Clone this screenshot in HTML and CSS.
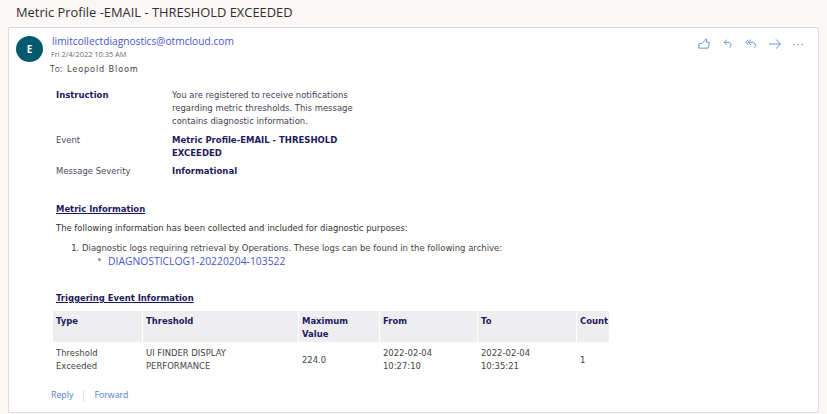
FILE: index.html
```html
<!DOCTYPE html>
<html lang="en">
<head>
<meta charset="utf-8">
<title>Metric Profile</title>
<link rel="stylesheet" href="styles.css">
</head>
<body>
<div class="subject">Metric Profile -EMAIL - THRESHOLD EXCEEDED</div>
<main class="card">
  <header class="head">
    <div class="avatar">E</div>
    <div class="meta">
      <div class="sender">limitcollectdiagnostics@otmcloud.com</div>
      <div class="date">Fri 2/4/2022 10:35 AM</div>
      <div class="to"><span class="to-label">To:</span><span class="to-name">Leopold Bloom</span></div>
    </div>
    <div class="actions">
      <svg class="icon" viewBox="0 0 14 14" fill="none" stroke="#5b92dc" stroke-width="1.100"><path d="M1 6.500h3.200L8 3l1-2 1.200.8-.6 3h3.600l-1.200 7H1z"/></svg>
      <svg class="icon" viewBox="0 0 14 14" fill="none" stroke="#5b92dc" stroke-width="1.100"><path d="M5.500 2 2.500 5l3 3M2.500 5H7c2.500 0 3.500 1.500 3.500 3.200 0 1.500-.8 2.800-1.800 3.300"/></svg>
      <svg class="icon" viewBox="0 0 14 14" fill="none" stroke="#5b92dc" stroke-width="1.100"><path d="M4 2 1 5l3 3M7 2 4 5l3 3M4 5h4.500C10.500 5 12 6.300 12 8.400c0 1.400-.7 2.500-1.800 3.100"/></svg>
      <svg class="icon" viewBox="0 0 14 14" fill="none" stroke="#5b92dc" stroke-width="1.100"><path d="M0 7h13.500M8 1.500 13.500 7 8 12.500"/></svg>
      <svg class="icon" viewBox="0 0 14 14" fill="#5b92dc"><circle cx="2" cy="7.500" r=".9"/><circle cx="7" cy="7.500" r=".9"/><circle cx="12" cy="7.500" r=".9"/></svg>
    </div>
  </header>

  <section class="body">
    <dl class="info">
      <dt class="strong">Instruction</dt>
      <dd>You are registered to receive notifications regarding metric thresholds. This message contains diagnostic information.</dd>
      <dt>Event</dt>
      <dd class="strong">Metric Profile-EMAIL - THRESHOLD EXCEEDED</dd>
      <dt>Message Severity</dt>
      <dd class="strong">Informational</dd>
    </dl>

    <h2 class="section-title metric-title">Metric Information</h2>
    <p class="intro">The following information has been collected and included for diagnostic purposes:</p>
    <ol class="logs">
      <li>Diagnostic logs requiring retrieval by Operations. These logs can be found in the following archive:
        <ul class="files"><li><a href="#">DIAGNOSTICLOG1-20220204-103522</a></li></ul>
      </li>
    </ol>

    <h2 class="section-title trigger-title">Triggering Event Information</h2>
    <table class="events">
      <thead>
        <tr><th class="c1">Type</th><th class="c2">Threshold</th><th class="c3">Maximum Value</th><th class="c4">From</th><th class="c5">To</th><th class="c6">Count</th></tr>
      </thead>
      <tbody>
        <tr><td>Threshold Exceeded</td><td>UI FINDER DISPLAY PERFORMANCE</td><td>224.0</td><td>2022-02-04 10:27:10</td><td>2022-02-04 10:35:21</td><td class="last">1</td></tr>
      </tbody>
    </table>
  </section>

  <footer class="foot">
    <a href="#">Reply</a>
    <span class="sep"></span>
    <a href="#">Forward</a>
  </footer>
</main>
</body>
</html>
```

FILE: styles.css
```css
html, body {
  margin: 0;
  padding: 0;
}
body {
  width: 827px;
  height: 414px;
  overflow: hidden;
  background: #fbf7f6;
  font-family: "DejaVu Sans", Verdana, sans-serif;
  font-size: 8.450px;
  line-height: 13px;
  color: #3f3f47;
}
.subject {
  height: 27px;
  box-sizing: border-box;
  padding: 2px 0 0 16px;
  font-family: "Open Sans", "Noto Sans", sans-serif;
  font-size: 12.900px;
  line-height: 20px;
  color: #2f2f2f;
}
.card {
  margin-left: 8px;
  width: 811px;
  height: 386px;
  box-sizing: border-box;
  background: #fff;
  border: 1px solid #dedcdb;
  border-radius: 2px;
  position: relative;
}
.head {
  display: flex;
  padding: 8px 0 0 7px;
  height: 50px;
  box-sizing: border-box;
}
.avatar {
  flex: none;
  width: 27px;
  height: 26px;
  border-radius: 50%;
  background: #04596f;
  color: #fff;
  display: flex;
  align-items: center;
  justify-content: center;
  font: bold 10px/1 "Open Sans", sans-serif;
}
.meta {
  margin-left: 7px;
  font-family: "Open Sans", sans-serif;
}
.sender {
  margin: -2px 0 0 2px;
  font-size: 10.200px;
  line-height: 15px;
  color: #4a55c9;
}
.date {
  font-size: 7.400px;
  line-height: 11px;
  color: #6b6b6b;
  margin-left: 1px;
}
.to {
  display: flex;
  margin-top: 3px;
  line-height: 12px;
  color: #444;
}
.to-label {
  width: 17px;
  font-size: 8.500px;
}
.to-name {
  font-family: "DejaVu Sans", sans-serif;
  font-size: 8.200px;
  letter-spacing: .85px;
}
.actions {
  margin-left: auto;
  margin-right: 14px;
  margin-top: 2px;
  display: flex;
  gap: 11.500px;
  height: 12px;
}
.icon {
  width: 12px;
  height: 12px;
}
.body {
  padding: 11px 0 0 47px;
}
.info {
  margin: 0;
  display: grid;
  grid-template-columns: 116px 184px;
  row-gap: 5.500px;
}
.info dt {
  margin: 0;
  color: #4a4a60;
}
.info dd {
  margin: 0;
  color: #3f3f55;
}
.info .strong {
  font-size: 8.500px;
  font-weight: bold;
  color: #1d1a5c;
}
.section-title {
  margin: 0;
  font-size: 8.450px;
  line-height: 13px;
  font-weight: bold;
  color: #1d1a5c;
  text-decoration: underline;
}
.metric-title {
  margin-top: 25px;
}
.intro {
  margin: 6px 0 0;
  color: #333;
}
.logs {
  margin: 7px 0 0;
  padding: 0 0 0 26px;
  font-size: 8.490px;
}
.files {
  margin: 0 0 0 16px;
  padding: 0;
  list-style: none;
}
.files li {
  display: flex;
  gap: 7px;
}
.files li::before {
  content: "";
  flex: none;
  width: 3px;
  height: 3px;
  margin-top: 3px;
  border-radius: 50%;
  background: #8a8aa8;
}
.files a {
  font-family: "Open Sans", sans-serif;
  font-size: 10.350px;
  color: #4a55c9;
  text-decoration: none;
}
.trigger-title {
  margin-top: 24px;
}
.events {
  margin: 6px 0 0 -3px;
  border-collapse: separate;
  border-spacing: 0;
  table-layout: fixed;
  width: 557px;
}
.events th {
  background: #eeedf0;
  border-right: 1px solid #fff;
  padding: 3.500px 2px 1px 3px;
  height: 31px;
  box-sizing: border-box;
  text-align: left;
  vertical-align: top;
  font-weight: bold;
  color: #1d1a5c;
}
.events td {
  padding: 5px 30px 0 3px;
  color: #444;
  vertical-align: middle;
}
.events td.last {
  padding-right: 0;
}
.c1 { width: 90px; }
.c2 { width: 156px; }
.c3 { width: 81px; }
.c4 { width: 98px; }
.c5 { width: 99px; }
.c6 { width: 33px; }
.foot {
  position: absolute;
  left: 42px;
  top: 361px;
  display: flex;
  align-items: center;
  gap: 10px;
  font-family: "Open Sans", sans-serif;
  font-size: 8.800px;
  line-height: 13px;
}
.foot a {
  color: #4f82cf;
  text-decoration: none;
}
.sep {
  width: 1px;
  height: 12px;
  background: #e3e3e3;
}
```
